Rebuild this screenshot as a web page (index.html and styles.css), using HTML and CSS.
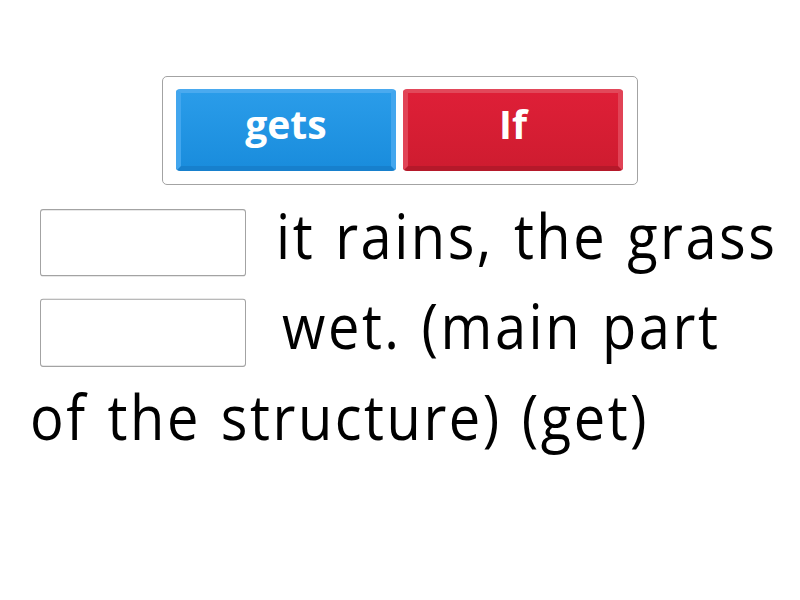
FILE: index.html
```html
<!DOCTYPE html>
<html lang="en">

<head>
    <meta charset="UTF-8">
    <meta name="viewport" content="width=device-width, initial-scale=1.0">
    <title>Complete the sentence</title>
    <link rel="stylesheet" href="styles.css">
</head>

<body>
    <div class="activity">
        <div class="word-bank">
            <div class="tile tile-blue">gets</div>
            <div class="tile tile-red">If</div>
        </div>
        <p class="sentence">
            <span class="blank"></span> it rains, the grass
            <span class="blank blank-gap"></span> wet. (main part of the structure) (get)
        </p>
    </div>
</body>

</html>
```
FILE: styles.css
```css
body {
    margin: 0;
    background-color: #ffffff;
    font-family: 'Open Sans', 'Noto Sans', sans-serif;
}

.activity {
    width: 800px;
    height: 600px;
    padding-top: 76px;
    box-sizing: border-box;
}

.word-bank {
    width: 476px;
    margin: 0 auto;
    padding: 12px 14px 13px 13px;
    box-sizing: border-box;
    border: 1px solid #a3a3a3;
    border-radius: 5px;
    display: flex;
    gap: 7px;
}

.tile {
    width: 220px;
    height: 82px;
    box-sizing: border-box;
    border-radius: 4px;
    border: 5px solid;
    border-top-width: 4px;
    display: flex;
    justify-content: center;
    align-items: center;
    color: #ffffff;
    font-weight: bold;
    font-size: 39px;
    padding-bottom: 12px;
}

.tile-blue {
    background: linear-gradient(#2a9ce9, #1a8ddd);
    border-color: #4aaaef #42a6ee #1780cd #42a6ee;
}

.tile-red {
    background: linear-gradient(#de1f37, #cf1c30);
    border-color: #e2485a #e14356 #b5192a #e14356;
}

.sentence {
    margin: 5px 0 0 30px;
    width: 750px;
    font-size: 56px;
    line-height: 80.4px;
    letter-spacing: 2.5px;
    word-spacing: 3px;
    color: #000000;
    transform: scaleY(1.12);
    transform-origin: top left;
}

.blank {
    display: inline-block;
    width: 206px;
    height: 60.7px;
    box-sizing: border-box;
    margin: 0 10px;
    border: 1px solid #a3a3a3;
    border-radius: 3px;
    vertical-align: middle;
}

.blank-gap {
    margin-right: 16px;
}
```
